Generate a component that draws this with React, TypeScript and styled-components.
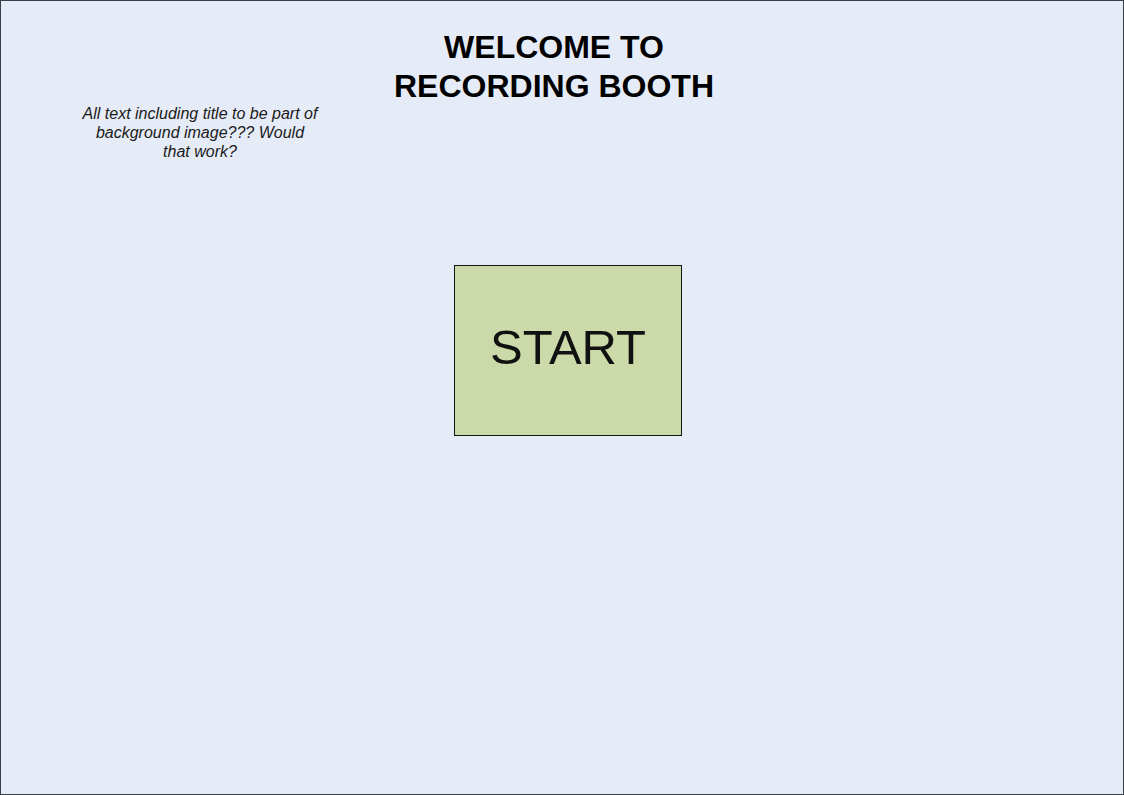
import styled, { createGlobalStyle } from "styled-components";

const GlobalStyle = createGlobalStyle`
  html, body {
    margin: 0;
    padding: 0;
    background: #ffffff;
  }
  body {
    font-family: "Liberation Sans", Arial, sans-serif;
  }
`;

const Frame = styled.div`
  box-sizing: border-box;
  width: 1124px;
  height: 795px;
  border: 1px solid #3a3f47;
  background-color: #e6ecf7;
  display: flex;
  flex-direction: column;
`;

const Header = styled.div`
  display: flex;
  align-items: flex-start;
  padding: 27px 0 0 80px;
`;

const Note = styled.p`
  width: 238px;
  margin: 76px 0 0;
  font-size: 16px;
  line-height: 19px;
  font-style: italic;
  text-align: center;
  color: #1a1a1a;
`;

const Title = styled.h1`
  width: 470px;
  margin: 0;
  font-size: 32px;
  line-height: 39px;
  font-weight: bold;
  text-align: center;
  color: #000000;
`;

const Stage = styled.div`
  display: flex;
  justify-content: center;
  padding: 0 0 0 12px;
  margin-top: 104px;
`;

const StartButton = styled.button`
  box-sizing: border-box;
  width: 228px;
  height: 171px;
  border: 1px solid #151515;
  background-color: #ccdaaa;
  font-family: "Liberation Sans", Arial, sans-serif;
  font-size: 49px;
  color: #111111;
  cursor: pointer;
  padding: 0 0 8px;
`;

export default function App() {
  return (
    <>
      <GlobalStyle />
      <Frame>
        <Header>
          <Note>
            All text including title to be part of background image??? Would
            that work?
          </Note>
          <Title>
            WELCOME TO
            <br />
            RECORDING BOOTH
          </Title>
        </Header>
        <Stage>
          <StartButton>START</StartButton>
        </Stage>
      </Frame>
    </>
  );
}
